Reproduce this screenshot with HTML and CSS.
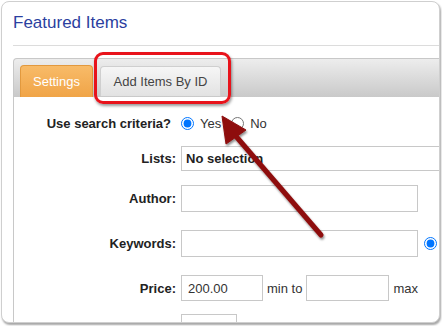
FILE: index.html
```html
<!DOCTYPE html>
<html>
<head>
<meta charset="utf-8">
<link rel="stylesheet" href="styles.css">
</head>
<body>
<div class="frame">
  <h1 class="title">Featured Items</h1>
  <div class="tabs">
    <div class="tabbar">
      <span class="tab active">Settings</span>
      <span class="tab">Add Items By ID</span>
    </div>
    <div class="panel">
      <div class="row row-criteria">
        <label class="lbl lbl-criteria">Use search criteria?</label>
        <div class="ctl">
          <input type="radio" name="c" class="radio" checked><span class="opt">Yes</span>
          <input type="radio" name="c" class="radio"><span class="opt">No</span>
        </div>
      </div>
      <div class="row row-lists">
        <label class="lbl">Lists:</label>
        <div class="ctl"><div class="field field-lists">No selection</div></div>
      </div>
      <div class="row row-author">
        <label class="lbl">Author:</label>
        <div class="ctl"><div class="field field-wide"></div></div>
      </div>
      <div class="row row-keywords">
        <label class="lbl">Keywords:</label>
        <div class="ctl"><div class="field field-wide"></div><input type="radio" name="k" class="radio radio-kw" checked></div>
      </div>
      <div class="row row-price">
        <label class="lbl">Price:</label>
        <div class="ctl"><div class="field field-price">200.00</div><span class="unit">min to</span><div class="field field-price2"></div><span class="unit">max</span></div>
      </div>
      <div class="row row-last">
        <label class="lbl"></label>
        <div class="ctl"><div class="field field-small"></div></div>
      </div>
    </div>
  </div>
  <div class="highlight"></div>
  <svg class="arrow" width="442" height="326" viewBox="0 0 442 326">
    <defs>
      <filter id="sh" x="-20%" y="-20%" width="140%" height="140%">
        <feDropShadow dx="1" dy="2" stdDeviation="1.2" flood-color="#000" flood-opacity="0.45"/>
      </filter>
    </defs>
    <g filter="url(#sh)" fill="#8e0d0d" stroke="#8e0d0d">
      <line x1="234" y1="134" x2="321" y2="235" stroke-width="5" stroke-linecap="round"/>
      <polygon points="222,116 246,130 226,144" stroke-width="1" stroke-linejoin="round"/>
    </g>
  </svg>
</div>
</body>
</html>
```

FILE: styles.css
```css
* { box-sizing: border-box; }
html, body { margin: 0; padding: 0; background: #ffffff; }
body {
  font-family: "Liberation Sans", Arial, sans-serif;
  font-size: 13px;
  color: #333;
  width: 442px;
  height: 326px;
  overflow: hidden;
}
.frame {
  position: relative;
  margin: 1px 0 0 1px;
  width: 439px;
  height: 322px;
  border: 1px solid #cfcfcf;
  border-radius: 8px;
  box-shadow: 1px 2px 2px rgba(0,0,0,0.35);
  background: #fff;
  overflow: hidden;
  padding-left: 11px;
}
.title {
  margin: 0;
  padding: 11px 0 12px 0;
  font-size: 17px;
  line-height: 20px;
  font-weight: normal;
  color: #2b3fa0;
  border-bottom: 1px solid #dcdcdc;
}
.tabs {
  margin-top: 12px;
  margin-right: -12px;
}
.tabbar {
  height: 39px;
  border: 1px solid #c8c8c8;
  border-bottom: none;
  border-radius: 4px 0 0 0;
  background: linear-gradient(#ededed, #c9c9c9);
  display: flex;
  align-items: flex-end;
  padding-left: 6px;
  gap: 7px;
}
.tab {
  display: flex;
  align-items: center;
  justify-content: center;
  border: 1px solid #cfcfcf;
  border-bottom: none;
  border-radius: 4px 4px 0 0;
  color: #444;
  font-size: 13px;
}
.tab.active {
  height: 32px;
  width: 73px;
  background: linear-gradient(#f8bb68, #f0a447);
  border-color: #e2993e;
  color: #fff;
}
.tab:not(.active) {
  height: 30px;
  width: 121px;
  margin-bottom: 1px;
  background: linear-gradient(#f6f6f6, #e2e2e2);
}
.panel {
  border-left: 1px solid #c8c8c8;
  padding-top: 18px;
  height: 240px;
}
.row {
  display: flex;
  align-items: center;
}
.lbl {
  width: 162px;
  flex: none;
  text-align: right;
  font-weight: bold;
  color: #222;
  padding-right: 0;
}
.lbl-criteria { padding-right: 5px; }
.ctl {
  margin-left: 5px;
  display: flex;
  align-items: center;
  flex: none;
}
.row-criteria { height: 16px; }
.row-lists { margin-top: 15px; height: 25px; }
.row-author { margin-top: 14px; height: 27px; }
.row-keywords { margin-top: 18px; height: 27px; }
.row-price { margin-top: 18px; height: 26px; }
.row-last { margin-top: 13px; height: 26px; align-items: flex-start; }
.radio {
  margin: 0;
  width: 13px;
  height: 13px;
}
.opt { margin-left: 6px; margin-right: 10px; color: #333; }
.field {
  border: 1px solid #c8c8c8;
  background: #fff;
  padding-left: 5px;
  display: flex;
  align-items: center;
  color: #333;
}
.field-lists { width: 300px; height: 25px; font-weight: bold; color: #222; padding-left: 4px; }
.field-wide { width: 237px; height: 27px; }
.radio-kw { margin-left: 6px; }
.field-price { width: 82px; height: 26px; padding-left: 6px; }
.field-price2 { width: 83px; height: 26px; }
.field-small { width: 56px; height: 26px; }
.unit { margin: 0 4px; color: #333; }
.highlight {
  position: absolute;
  left: 92px;
  top: 50px;
  width: 137px;
  height: 52px;
  border: 3px solid #e8131b;
  border-radius: 9px;
  box-shadow: 1px 2px 3px rgba(0,0,0,0.4);
}
.arrow {
  position: absolute;
  left: -2px;
  top: -2px;
}
```
